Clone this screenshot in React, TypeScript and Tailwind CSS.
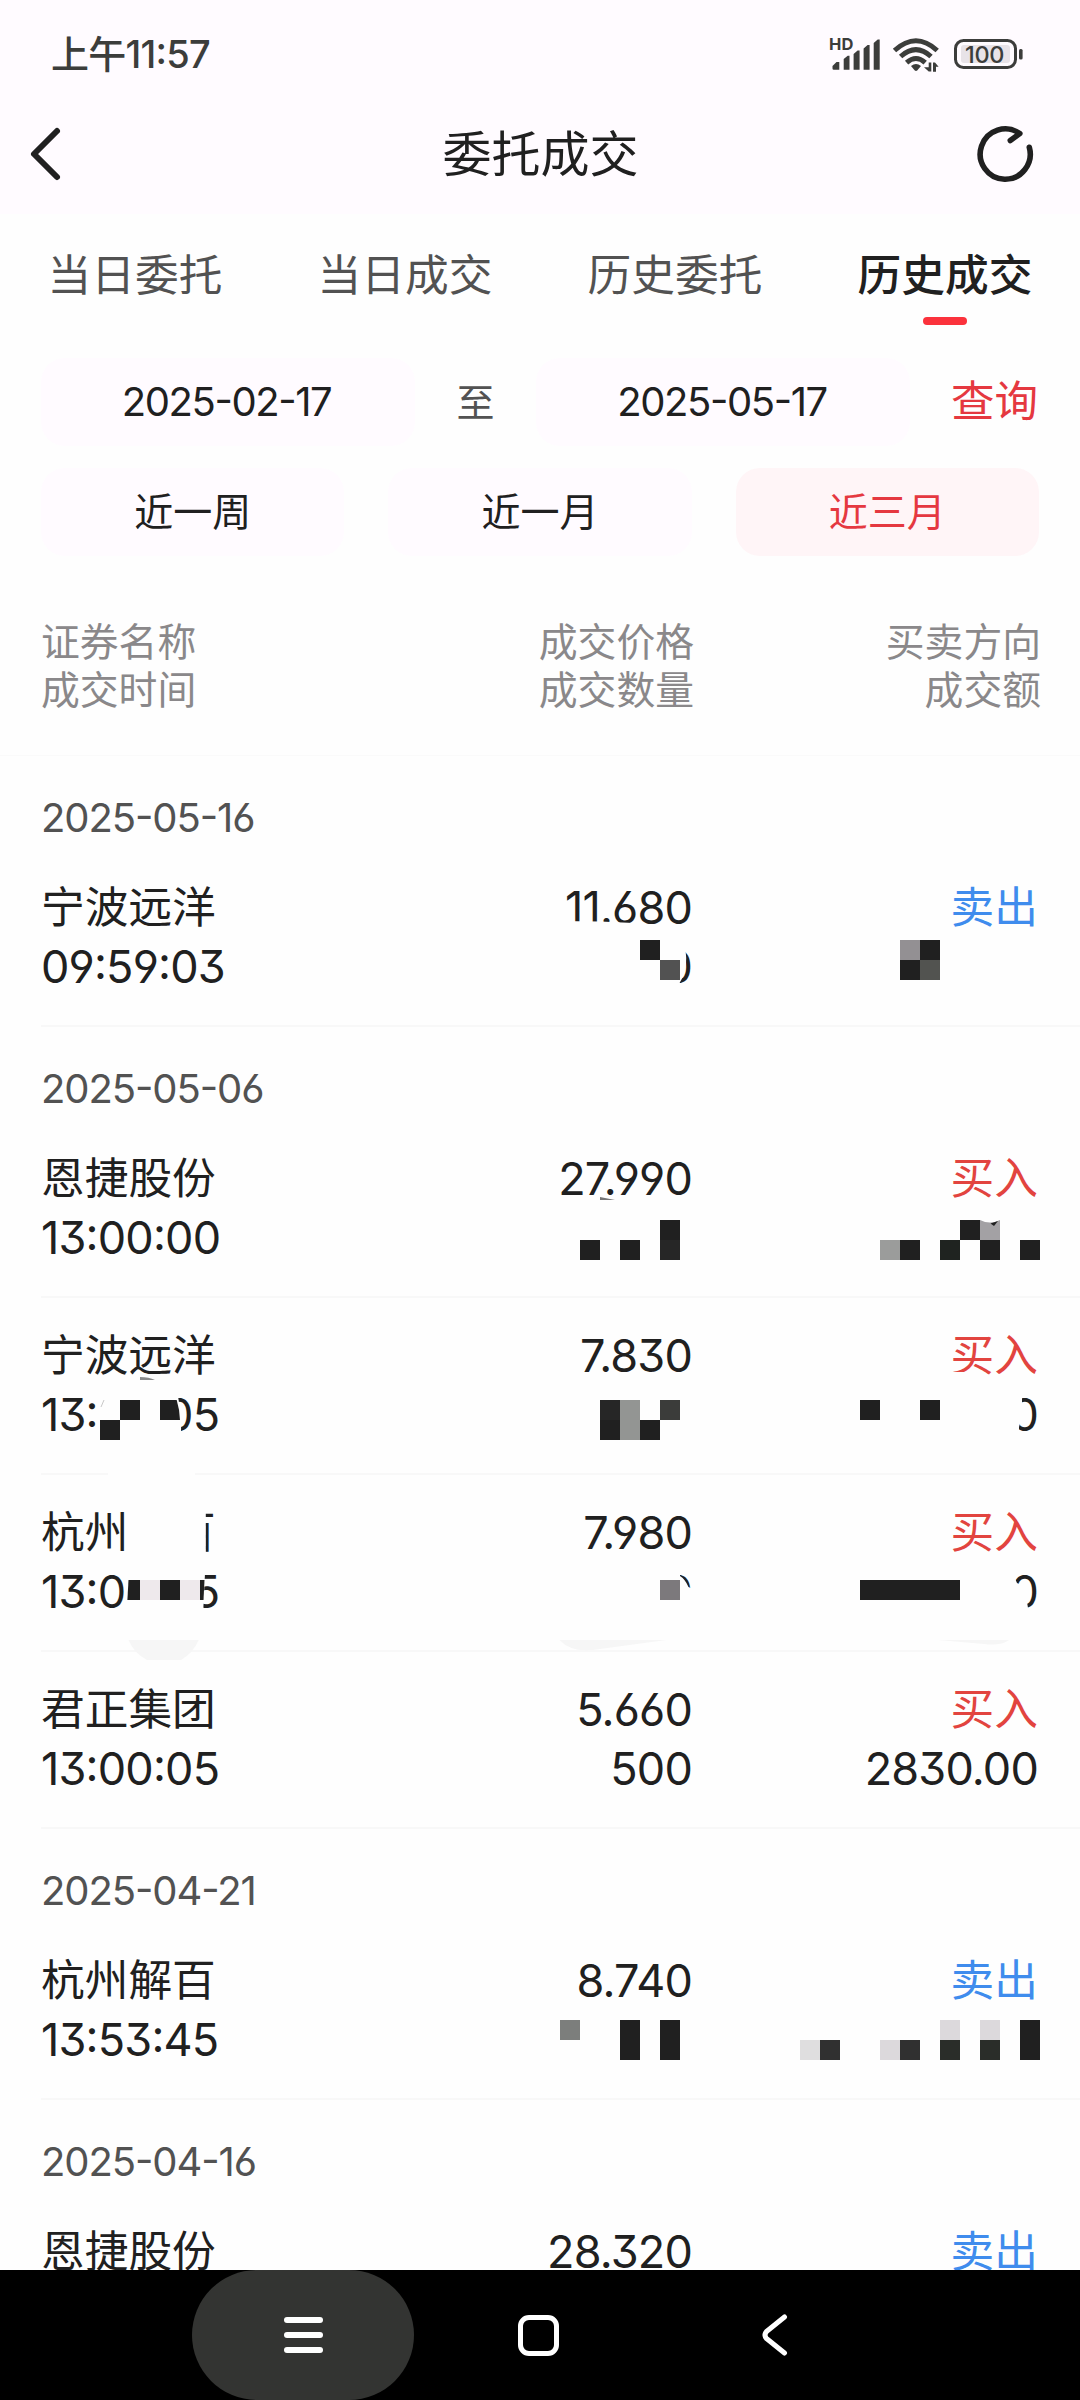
type Side = "buy" | "sell";

type Trade = {
  name: string;
  time: string;
  price: string;
  quantity?: string;
  side: Side;
  amount?: string;
};

type TradeGroup = {
  date: string;
  trades: Trade[];
};

const tabs = ["当日委托", "当日成交", "历史委托", "历史成交"];
const ranges = ["近一周", "近一月", "近三月"];

const groups: TradeGroup[] = [
  {
    date: "2025-05-16",
    trades: [
      { name: "宁波远洋", time: "09:59:03", price: "11.680", quantity: "0", side: "sell" },
    ],
  },
  {
    date: "2025-05-06",
    trades: [
      { name: "恩捷股份", time: "13:00:00", price: "27.990", side: "buy" },
      { name: "宁波远洋", time: "13:00:05", price: "7.830", side: "buy", amount: "0" },
      { name: "杭州解百", time: "13:00:05", price: "7.980", quantity: "0", side: "buy", amount: "0" },
      { name: "君正集团", time: "13:00:05", price: "5.660", quantity: "500", side: "buy", amount: "2830.00" },
    ],
  },
  {
    date: "2025-04-21",
    trades: [{ name: "杭州解百", time: "13:53:45", price: "8.740", side: "sell" }],
  },
  {
    date: "2025-04-16",
    trades: [{ name: "恩捷股份", time: "", price: "28.320", side: "sell" }],
  },
];

// x, y, width, height, colour
const mosaic: [number, number, number, number, string][] = [
  [640, 940, 20, 20, "#202020"],
  [660, 960, 20, 20, "#525252"],
  [900, 940, 20, 20, "#939093"],
  [920, 940, 20, 20, "#202020"],
  [900, 960, 20, 20, "#202020"],
  [920, 960, 20, 20, "#525350"],

  [580, 1240, 20, 20, "#202020"],
  [620, 1240, 20, 20, "#202020"],
  [660, 1220, 20, 20, "#202020"],
  [660, 1240, 20, 20, "#262626"],
  [880, 1240, 20, 20, "#9b9c9b"],
  [900, 1240, 20, 20, "#202020"],
  [940, 1240, 20, 20, "#1f2320"],
  [960, 1220, 20, 20, "#202020"],
  [980, 1220, 20, 20, "#a3a1a4"],
  [980, 1240, 20, 20, "#202020"],
  [1020, 1240, 20, 20, "#202020"],

  [120, 1400, 20, 20, "#202020"],
  [100, 1420, 20, 20, "#202020"],
  [600, 1400, 20, 20, "#262626"],
  [600, 1420, 20, 20, "#202020"],
  [620, 1400, 20, 40, "#939593"],
  [640, 1420, 20, 20, "#202020"],
  [660, 1400, 20, 20, "#3b3c3a"],
  [860, 1400, 20, 20, "#202020"],
  [920, 1400, 20, 20, "#202020"],

  [140, 1580, 20, 20, "#eee9ec"],
  [160, 1580, 20, 20, "#202020"],
  [180, 1580, 20, 20, "#eee9ec"],
  [660, 1580, 20, 20, "#7c797c"],
  [860, 1580, 100, 20, "#202020"],

  [560, 2020, 20, 20, "#7c7e7c"],
  [620, 2020, 20, 40, "#202020"],
  [660, 2020, 20, 40, "#202020"],
  [800, 2040, 20, 20, "#dfdedf"],
  [820, 2040, 20, 20, "#303030"],
  [880, 2040, 20, 20, "#dcd9dc"],
  [900, 2040, 20, 20, "#303030"],
  [940, 2020, 20, 20, "#dcd9dc"],
  [940, 2040, 20, 20, "#2a2d29"],
  [980, 2020, 20, 20, "#dcd9dc"],
  [980, 2040, 20, 20, "#2a2d29"],
  [1020, 2020, 20, 40, "#202020"],
];

// Areas wiped by the brush before the blocks go on top
const wipes = [
  "M556 921L600 921.5L645 923.5L650 928H556Z",
  "M655 940H683Q691 965 679 984L676 992H655Z",
  "M97 1385H175Q183 1410 180.5 1445H97Z",
  "M108 1468H195V1478H108Z",
  "M948 1372H985V1380H948Z",
  "M1000 1388H1022V1415L1019 1427V1440H1000Z",
  "M126 1505H205.8V1560H126Z",
  "M125 1562H205.5L203 1616H125Z",
  "M655 1565H680V1576Q685 1579 688.5 1587L695 1590V1616H655Z",
  "M1004 1565L1013 1574L1017 1583L1027 1588V1602L1029 1614H1004Z",
];

function StatusIcons() {
  return (
    <svg width="200" height="44" viewBox="826 32 200 44" fill="#3c3d3b">
      <text x="829" y="50" fontSize="16.5" fontWeight="700" textLength="24.5">
        HD
      </text>
      <path d="M832.5 66l4-4h2.8v7.8h-5.5q-1.3 0-1.3-1.3zM843.7 59l4-3.2h1.8v14h-5.8zM853.6 54l4-3.4h2v19.2h-6zM863.6 48.5l4-3.6h2v24.9h-6zM873.7 43l4-3.5h2v30.3h-6z" />
      <g fill="none" stroke="#3c3d3b" strokeWidth="5">
        <path d="M894.5 50.5Q916 31 937.2 50.5" />
        <path d="M900.6 56.5Q916 42.8 931 56.5" />
        <path d="M906.6 62.6Q916 54.4 925.2 62.6" />
      </g>
      <path d="M911 66q5-4 10 0l-3.8 4.6q-1.2.9-2.4 0z" />
      <path d="M928.7 62.5h2.6v9h-2.6l-4.7-4.3h4.7zM933 62.5h2l3.6 4.2H936v5h-3z" />
      <rect x="961" y="45" width="49" height="18" rx="3" fill="#e8e3e8" />
      <rect x="955.5" y="40.5" width="60" height="27" rx="8" fill="none" stroke="#3c3d3b" strokeWidth="3" />
      <rect x="1019" y="49" width="3.6" height="10.5" rx="1.5" />
      <text x="965" y="63" fontSize="23.5" fontWeight="500" textLength="39.5">
        100
      </text>
    </svg>
  );
}

function StatusBar() {
  return (
    <div className="flex h-[108px] items-center justify-between pl-[51px] pr-[54px]">
      <span className="text-[38px] font-medium tracking-[-0.02em] text-[#3c3d3b]">上午11:57</span>
      <StatusIcons />
    </div>
  );
}

function TitleBar() {
  return (
    <header className="flex h-[92px] items-center justify-between pl-[28px] pr-[43px]">
      <svg width="64" height="64" viewBox="28 122 64 64" fill="none" stroke="#202020" strokeWidth="6" strokeLinecap="round" strokeLinejoin="round">
        <path d="M57 131L34 154L57 177" />
      </svg>
      <h1 className="pl-[16px] text-[49px] leading-none text-[#202020]">委托成交</h1>
      <svg width="64" height="64" viewBox="973 122 64 64" fill="none" stroke="#202020" strokeWidth="5.6" strokeLinecap="round" strokeLinejoin="round">
        <path d="M1029.3 147.3A25 25.2 0 1 1 1019.8 133.6L1010.3 140.5" />
      </svg>
    </header>
  );
}

function Tabs() {
  return (
    <nav className="grid h-[144px] shrink-0 grid-cols-4">
      {tabs.map((tab, index) => {
        const active = index === tabs.length - 1;
        return (
          <div key={tab} className="flex flex-col items-center pt-[32px]">
            <span
              className={
                active
                  ? "text-[43.7px] leading-[60px] font-medium text-[#202020]"
                  : "text-[43.7px] leading-[60px] text-[#525252]"
              }
            >
              {tab}
            </span>
            {active && <span className="mt-[11px] h-[8px] w-[44px] rounded-full bg-[#fb323c]" />}
          </div>
        );
      })}
    </nav>
  );
}

function Filters() {
  return (
    <section className="shrink-0 px-[41px]">
      <div className="flex h-[88px] items-center text-[40px] tracking-[-0.035em] text-[#202020]">
        <div className="flex h-full w-[374px] items-center justify-center rounded-[24px] bg-[#fffbff] pr-[3px]">2025-02-17</div>
        <span className="w-[121px] text-center text-[38px] tracking-normal text-[#525252]">至</span>
        <div className="flex h-full w-[374px] items-center justify-center rounded-[24px] bg-[#fffbff] pr-[2px]">2025-05-17</div>
        <span className="ml-auto pr-px text-[43.5px] tracking-normal text-[#e53840]">查询</span>
      </div>
      <div className="mt-[22px] grid h-[88px] grid-cols-3 gap-[44px]">
        {ranges.map((range) => (
          <div
            key={range}
            className={
              range === "近三月"
                ? "flex items-center justify-center rounded-[24px] bg-[#fff5f7] text-[39px] text-[#e53840]"
                : "flex items-center justify-center rounded-[24px] bg-[#fffbff] text-[39px] text-[#202020]"
            }
          >
            {range}
          </div>
        ))}
      </div>
    </section>
  );
}

function TableHead() {
  return (
    <div className="grid h-[200px] shrink-0 grid-cols-[303px_350px_347px] border-b border-[#fafafa] px-[41px] pt-[62px] text-[38.8px] leading-[48px] text-[#8a888a]">
      <div>
        <p>证券名称</p>
        <p>成交时间</p>
      </div>
      <div className="text-right">
        <p>成交价格</p>
        <p>成交数量</p>
      </div>
      <div className="text-right">
        <p>买卖方向</p>
        <p>成交额</p>
      </div>
    </div>
  );
}

function TradeRow({ trade }: { trade: Trade }) {
  return (
    <div className="ml-[41px] grid h-[177px] grid-cols-[303px_349px_346px] border-b-2 border-[#f8f8f8] pt-[28px] text-[45px] leading-[60px] tracking-[-0.018em] text-[#202020]">
      <div>
        <p className="h-[59px] text-[43.7px] tracking-normal">{trade.name}</p>
        <p className="h-[60px]">{trade.time}</p>
      </div>
      <div className="pr-px text-right">
        <p className="h-[59px]">{trade.price}</p>
        <p className="h-[60px]">{trade.quantity}</p>
      </div>
      <div className="pr-px text-right">
        <p
          className={
            trade.side === "buy"
              ? "h-[59px] text-[43.7px] tracking-normal text-[#e2443f]"
              : "h-[59px] text-[43.7px] tracking-normal text-[#3f8ced]"
          }
        >
          {trade.side === "buy" ? "买入" : "卖出"}
        </p>
        <p className="h-[60px]">{trade.amount}</p>
      </div>
    </div>
  );
}

function Mosaic() {
  return (
    <svg className="absolute top-0 left-0" width="1080" height="1514" viewBox="0 756 1080 1514">
      {wipes.map((d) => (
        <path key={d} d={d} fill="#fefefe" />
      ))}
      {mosaic.map(([x, y, width, height, fill]) => (
        <rect key={`${x}-${y}`} x={x} y={y} width={width} height={height} fill={fill} shapeRendering="crispEdges" />
      ))}
      {/* half-covered blocks at the brush edges */}
      <path d="M160 1400H176.7Q179.5 1409 180 1420H160Z" fill="#202020" />
      <path d="M128.5 1580H140V1600H127.4Z" fill="#202020" />
      <path d="M200 1580H204.5L203.5 1600H200Z" fill="#202020" />
      <path d="M980 1220Q990 1225 1000 1220Z" fill="#fefefe" />
      <path d="M990.5 1223.5L998 1221L994 1226Z" fill="#202020" />
      <path d="M600 1197L615 1200H600Z" fill="#777" />
      <path d="M140 1377Q149 1377 155 1380H140Z" fill="#8a8a8a" />
      <path d="M101 1407L104 1400" stroke="#c8c8c8" />
      <path d="M128.5 1640H198.7Q193 1653 181 1660H147Q134 1653 128.5 1640Z" fill="#f6f6f6" />
      <path d="M559.6 1640H666.4L600 1649Q572 1654 559.6 1640Z" fill="#f6f6f6" />
      <path d="M938 1640H1009Q1001 1646 984 1644Z" fill="#f6f6f6" />
    </svg>
  );
}

function NavigationBar() {
  return (
    <footer className="flex h-[130px] shrink-0 items-center bg-black pl-[192px]">
      <div className="flex h-full w-[222px] items-center justify-center rounded-[65px] bg-[#333432]">
        <div className="flex flex-col gap-[9.4px]">
          <span className="h-[6px] w-[39px] rounded-full bg-white" />
          <span className="h-[6px] w-[39px] rounded-full bg-white" />
          <span className="h-[6px] w-[39px] rounded-full bg-white" />
        </div>
      </div>
      <div className="ml-[104px] size-[41px] rounded-[11px] border-[5px] border-white" />
      <svg className="ml-[201px]" width="32" height="48" viewBox="760 2311 32 48" fill="none" stroke="#fff" strokeWidth="5" strokeLinecap="round" strokeLinejoin="round">
        <path d="M784.5 2317L766.5 2331.5Q763.5 2335 766.5 2338.5L784.5 2353" />
      </svg>
    </footer>
  );
}

export default function App() {
  return (
    <div className="flex h-[2400px] w-[1080px] flex-col overflow-hidden bg-[#fefefe] font-['Inter','Noto_Sans_CJK_SC',sans-serif] [font-feature-settings:'cv03','cv04','cv09','case']">
      <div className="h-[214px] shrink-0 bg-[#fffbff]">
        <StatusBar />
        <TitleBar />
      </div>
      <main className="flex min-h-0 flex-1 flex-col overflow-hidden">
        <Tabs />
        <Filters />
        <TableHead />
        <div className="relative shrink-0">
          {groups.map((group) => (
            <section key={group.date}>
              <h2 className="h-[94px] pt-[37px] pl-[41px] text-[40px] leading-[50px] tracking-[-0.027em] text-[#525252]">
                {group.date}
              </h2>
              {group.trades.map((trade, index) => (
                <TradeRow key={index} trade={trade} />
              ))}
            </section>
          ))}
          <Mosaic />
        </div>
      </main>
      <NavigationBar />
    </div>
  );
}
